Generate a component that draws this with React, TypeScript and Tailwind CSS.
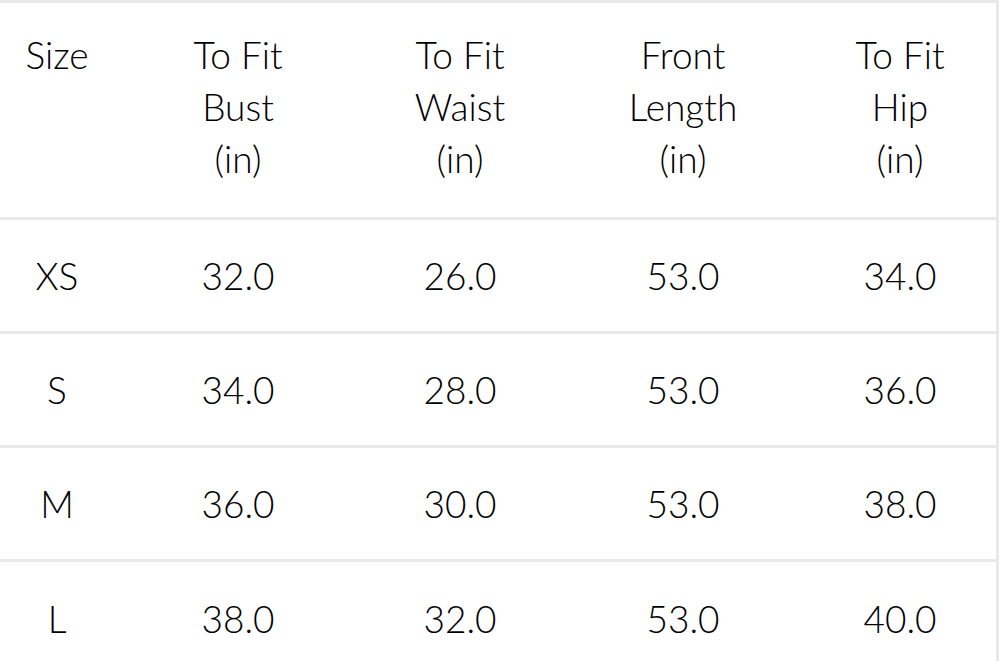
const columns = ['grid-cols-[114px_248px_196px_250px_184px]']

const headers = [
  ['Size'],
  ['To Fit', 'Bust', '(in)'],
  ['To Fit', 'Waist', '(in)'],
  ['Front', 'Length', '(in)'],
  ['To Fit', 'Hip', '(in)'],
]

const rows = [
  ['XS', '32.0', '26.0', '53.0', '34.0'],
  ['S', '34.0', '28.0', '53.0', '36.0'],
  ['M', '36.0', '30.0', '53.0', '38.0'],
  ['L', '38.0', '32.0', '53.0', '40.0'],
]

export default function App() {
  return (
    <div
      className="w-[1000px] h-[661px] overflow-hidden bg-white text-black"
      style={{ fontFamily: 'Lato, "Open Sans", sans-serif' }}
    >
      <div className="w-[999px] border-t-[3px] border-r-[3px] border-[#e9e9e9] font-light">
        {/* Header */}
        <div className={`grid ${columns[0]} h-[217px] items-start pt-[26px] border-b-[3px] border-[#e9e9e9] text-[37px] leading-[52px]`}>
          {headers.map((lines, i) => (
            <div key={i} className="flex flex-col items-center text-center">
              {lines.map((l) => (
                <span key={l}>{l}</span>
              ))}
            </div>
          ))}
        </div>

        {/* Body rows */}
        {rows.map((r, ri) => (
          <div
            key={r[0]}
            className={`grid ${columns[0]} h-[114px] items-center text-[37px] ${
              ri < rows.length - 1 ? 'border-b-[3px] border-[#e9e9e9]' : ''
            }`}
          >
            {r.map((v, i) => (
              <div key={i} className="text-center">
                {v}
              </div>
            ))}
          </div>
        ))}
      </div>
    </div>
  )
}
